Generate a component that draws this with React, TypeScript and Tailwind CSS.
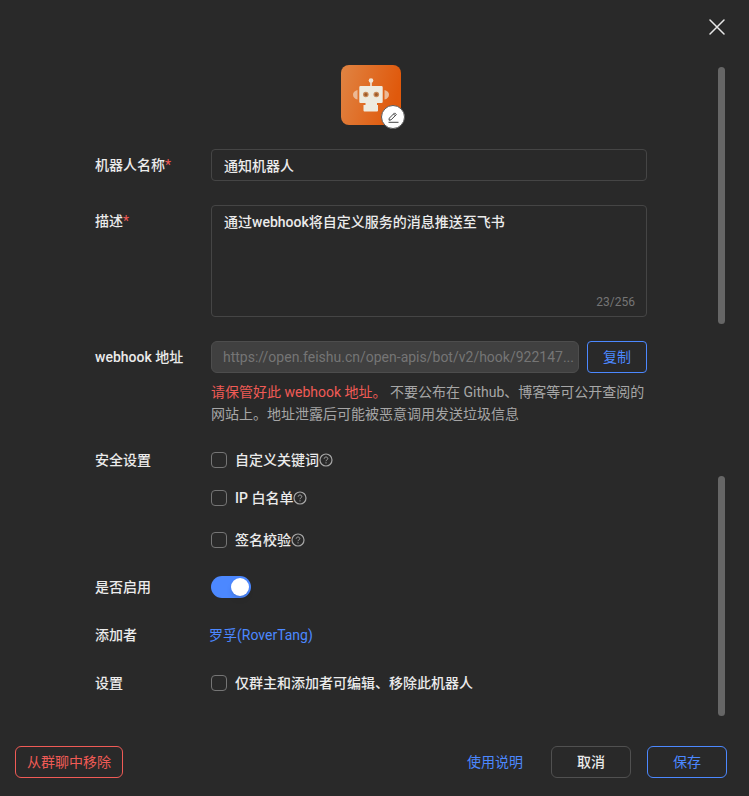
import { useState, type ReactNode } from "react";

const fontStack = "font-[Roboto,'Noto_Sans_CJK_SC',sans-serif]";

function RobotAvatar() {
  return (
    <svg viewBox="0 0 60 60" className="size-[60px]" aria-hidden="true">
      <defs>
        <linearGradient id="avatar-bg" x1="0" y1="0" x2="1" y2="0.25">
          <stop offset="0" stopColor="#e08443" />
          <stop offset="1" stopColor="#e0590c" />
        </linearGradient>
      </defs>
      <rect width="60" height="60" rx="8" fill="url(#avatar-bg)" />
      <path d="M16.500 25c-2.600.6-4.500 2.400-4.500 4.800s1.900 4.200 4.500 4.800z" fill="#ecb995" />
      <path d="M43.500 25c2.600.6 4.500 2.400 4.500 4.800s-1.900 4.200-4.500 4.800z" fill="#ecb995" />
      <circle cx="30" cy="15.500" r="2.300" fill="#f0e4d6" />
      <rect x="29.200" y="16" width="1.600" height="6" fill="#f0e4d6" />
      <path
        d="M19.500 21h21a1.200 1.200 0 0 1 1.200 1.200v14.600a1.200 1.200 0 0 1-1.200 1.200H36v2h1v5.500a1 1 0 0 1-1 1H23.500a1 1 0 0 1-1-1V40h2v-2h-5a1.200 1.200 0 0 1-1.200-1.200V22.200A1.200 1.200 0 0 1 19.500 21z"
        fill="#eeebe0"
      />
      <circle cx="24.800" cy="29.500" r="2.800" fill="#c98a58" />
      <circle cx="35.300" cy="29.500" r="2.800" fill="#c98a58" />
      <circle cx="24.800" cy="29.500" r="1.500" fill="#9a5a2c" />
      <circle cx="35.300" cy="29.500" r="1.500" fill="#9a5a2c" />
    </svg>
  );
}

function HelpIcon() {
  return (
    <svg viewBox="0 0 14 14" className="size-3.5 text-[#a6a6a6]" fill="none" stroke="currentColor" aria-hidden="true">
      <circle cx="7" cy="7" r="6" strokeWidth="1.200" />
      <path d="M5.200 5.700c0-1 .8-1.700 1.800-1.700s1.800.7 1.800 1.600c0 1.200-1.800 1.300-1.800 2.600" />
      <path d="M7 9.300v1.100" />
    </svg>
  );
}

type RowProps = {
  label: string;
  htmlFor?: string;
  required?: boolean;
  lineClass?: string;
  children: ReactNode;
};

function Row({ label, htmlFor, required, lineClass = "leading-6", children }: RowProps) {
  return (
    <div className="flex">
      <div className={`w-[116px] shrink-0 font-medium ${lineClass}`}>
        {htmlFor ? (
          <label htmlFor={htmlFor} className="block">
            {label}
            {required && <span className="font-normal text-[#f05b56]">*</span>}
          </label>
        ) : (
          <span className="block">{label}</span>
        )}
      </div>
      <div className="min-w-0 flex-1">{children}</div>
    </div>
  );
}

function Check({ label, help }: { label: string; help?: boolean }) {
  return (
    <label className="flex items-center font-medium">
      <input
        type="checkbox"
        className="mr-2 size-4 appearance-none rounded border border-[#757575] checked:border-[#4c88ff] checked:bg-[#4c88ff]"
      />
      {label}
      {help && <HelpIcon />}
    </label>
  );
}

export default function App() {
  const [name, setName] = useState("通知机器人");
  const [desc, setDesc] = useState("通过webhook将自定义服务的消息推送至飞书");
  return (
    <main className={`${fontStack} min-h-screen bg-[#292929] text-sm leading-[22px] text-[#ebebeb]`}>
      <header className="flex justify-end px-6 pt-[19px]">
        <button aria-label="关闭" className="block">
          <svg viewBox="0 0 16 16" className="size-4" stroke="#e6e6e6" strokeWidth="1.500" strokeLinecap="round">
            <path d="M1 1l14 14M15 1L1 15" />
          </svg>
        </button>
      </header>

      <div className="flex pt-8 pr-6">
        <form className="-mt-0.5 flex min-w-0 flex-1 flex-col gap-6 pr-[71px] pb-[21px] pl-[95px]">
          <div className="flex justify-center">
            <div className="relative">
              <RobotAvatar />
              <button
                type="button"
                aria-label="编辑头像"
                className="absolute -right-1 -bottom-1 flex size-6 items-center justify-center rounded-full border border-[#5a5a5a] bg-white"
              >
                <svg viewBox="0 0 12 12" className="size-3" fill="none" stroke="#444" aria-hidden="true">
                  <path d="M2.300 7.200 7.600 1.900l1.700 1.700L4 8.900l-2 .3zM6.500 3l1.700 1.700M1.500 11.300h10" />
                </svg>
              </button>
            </div>
          </div>

          <Row label="机器人名称" htmlFor="bot-name" required lineClass="leading-8">
            <input
              id="bot-name"
              value={name}
              onChange={(e) => setName(e.target.value)}
              className="block h-8 w-full rounded border border-[#454545] px-3 font-medium"
            />
          </Row>

          <Row label="描述" htmlFor="bot-desc" required lineClass="leading-8">
            <div className="relative">
              <textarea
                id="bot-desc"
                value={desc}
                onChange={(e) => setDesc(e.target.value)}
                className="block h-28 w-full resize-none rounded border border-[#454545] px-3 py-[5px] font-medium"
              />
              <span className="absolute right-3 bottom-1 text-xs leading-[22px] text-[#757575]">23/256</span>
            </div>
          </Row>

          <Row label="webhook 地址" htmlFor="webhook" lineClass="leading-8">
            <div className="flex gap-2">
              <input
                id="webhook"
                readOnly
                value="https://open.feishu.cn/open-apis/bot/v2/hook/922147..."
                className="h-8 min-w-0 flex-1 rounded-md border border-[#4d4d4d] bg-[#404040] pr-1 pl-[11px] text-[#757575]"
              />
              <button type="button" className="h-8 w-[60px] rounded border border-[#4c88ff] text-[#4c88ff]">
                复制
              </button>
            </div>
            <p className="mt-2 -mr-1 text-[#a6a6a6]">
              <span className="text-[#f05b56]">请保管好此 webhook 地址。</span> 不要公布在 Github、博客等可公开查阅的网站上。地址泄露后可能被恶意调用发送垃圾信息
            </p>
          </Row>

          <Row label="安全设置" lineClass="leading-[22px]">
            <div className="flex flex-col">
              <Check label="自定义关键词" help />
              <div className="mt-4 mb-5">
                <Check label="IP 白名单" help />
              </div>
              <Check label="签名校验" help />
            </div>
          </Row>

          <Row label="是否启用" htmlFor="enabled">
            <div className="flex h-6 items-center">
              <input
                id="enabled"
                type="checkbox"
                role="switch"
                defaultChecked
                className="flex h-[22px] w-10 appearance-none items-center rounded-full bg-[#757575] px-0.5 before:size-[18px] before:rounded-full before:bg-white before:shadow-md checked:justify-end checked:bg-[#4c88ff]"
              />
            </div>
          </Row>

          <Row label="添加者">
            <a href="#profile" className="-ml-0.5 block leading-6 text-[#4c88ff]">罗孚(RoverTang)</a>
          </Row>

          <Row label="设置">
            <div className="leading-6">
              <Check label="仅群主和添加者可编辑、移除此机器人" />
            </div>
          </Row>
        </form>

        <div className="flex w-[7px] flex-col justify-between" aria-hidden="true">
          <div className="h-[257px] rounded-full bg-[#666]" />
          <div className="h-60 rounded-full bg-[#666]" />
        </div>
      </div>

      <footer className="flex items-center pt-[30px] pr-[22px] pb-[18px] pl-[15px]">
        <button className="h-8 w-[108px] rounded-md border border-[#f05b56] text-[#f05b56]">从群聊中移除</button>
        <a href="#help" className="mr-7 ml-auto text-[#4c88ff]">使用说明</a>
        <button className="mr-4 h-8 w-20 rounded-md border border-[#505050] font-medium">取消</button>
        <button className="h-8 w-20 rounded-md border border-[#4c88ff] text-[#4c88ff]">保存</button>
      </footer>
    </main>
  );
}
